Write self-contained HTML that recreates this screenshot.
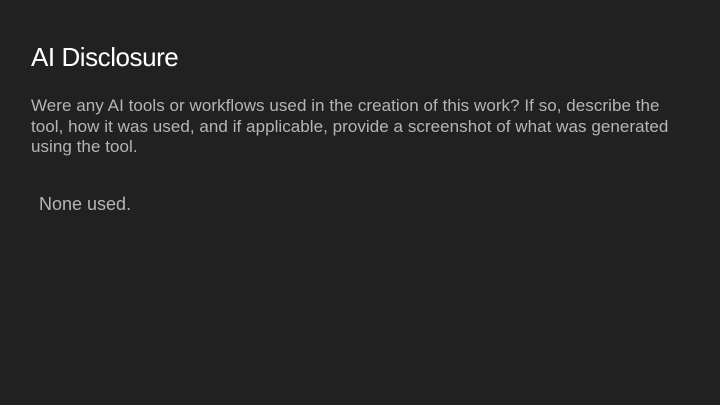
<!DOCTYPE html>
<html><head><style>
html,body{margin:0;padding:0;}
body{width:720px;height:405px;background:#212121;font-family:"Liberation Sans",Arial,sans-serif;position:relative;overflow:hidden;}
h1{position:absolute;left:31px;top:42px;margin:0;font-size:26px;font-weight:normal;color:#fff;letter-spacing:-0.45px;}
p.q{position:absolute;left:31px;top:96px;margin:0;width:660px;font-size:17px;line-height:20.5px;color:#b5b5b5;letter-spacing:0.05px;}
p.a{position:absolute;left:39px;top:194px;margin:0;font-size:18px;color:#b5b5b5;}
</style></head><body>
<h1>AI Disclosure</h1>
<p class="q">Were any AI tools or workflows used in the creation of this work? If so, describe the tool, how it was used, and if applicable, provide a screenshot of what was generated using the tool.</p>
<p class="a">None used.</p>
</body></html>
